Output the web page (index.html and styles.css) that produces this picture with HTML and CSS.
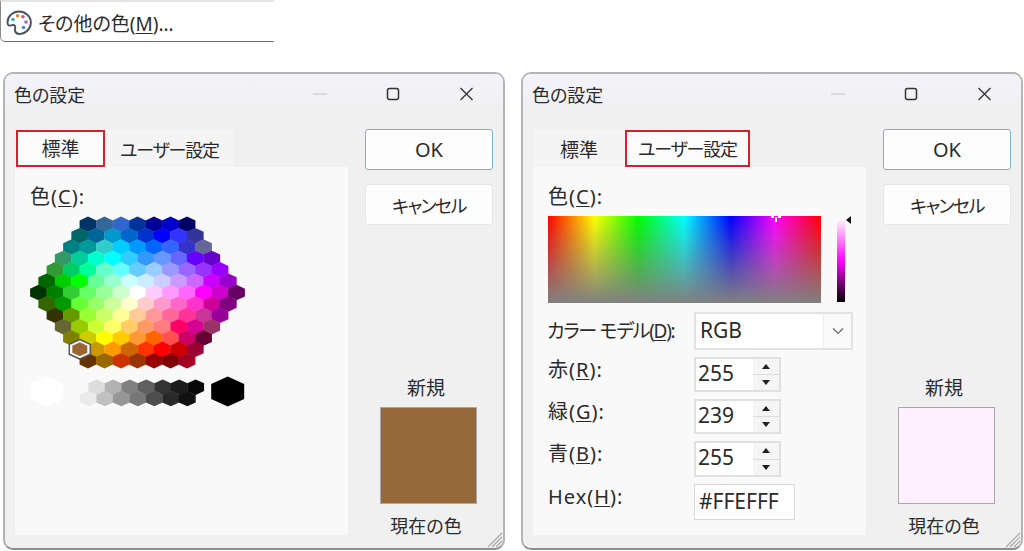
FILE: index.html
```html
<!DOCTYPE html>
<html lang="ja">
<head>
    <meta charset="UTF-8">
    <meta name="viewport" content="width=device-width, initial-scale=1.0">
    <title>色の設定</title>
    <link rel="stylesheet" href="styles.css">
</head>
<body>
    <div class="menu-item">
        <svg class="palette-icon" width="26" height="28" viewBox="0 0 26 28">
            <path d="M13 2.500C6.800 2.500 1.500 7.300 1.500 13.300c0 3.100 1.800 3.800 3.500 3.100 1.900-.7 3.800-.6 4.200 1.100.4 1.500-.6 2.700-.2 4.200.5 2.200 2.800 3.400 5.300 3.200 5.800-.5 10.600-5.400 10.600-11.400C24.900 7.300 19.200 2.500 13 2.500z" fill="#fff" stroke="#46525e" stroke-width="1.900"/>
            <circle cx="7" cy="10.500" r="1.800" fill="#3fa9c9"/>
            <circle cx="11.500" cy="6.800" r="1.800" fill="#e0883a"/>
            <circle cx="17" cy="7.800" r="1.800" fill="#d94f6e"/>
            <circle cx="20" cy="13" r="1.800" fill="#a45fc4"/>
            <circle cx="17.500" cy="18.500" r="1.800" fill="#5b7fd6"/>
        </svg>
        <span>その他の色(<u>M</u>)...</span>
    </div>

    <div class="dialogs">
        <div class="dialog">
            <div class="titlebar">
                <span class="title">色の設定</span>
                <div class="controls">
                    <svg width="73" height="16" viewBox="0 0 73 16"><path d="M29 8h14" stroke="#c4c4c8" stroke-width="1.200"/></svg>
                    <svg width="73" height="16" viewBox="0 0 73 16"><rect x="30.500" y="2.500" width="11" height="11" rx="2" fill="none" stroke="#333" stroke-width="1.500"/></svg>
                    <svg width="73" height="16" viewBox="0 0 73 16"><path d="M30.500 2l12 12M42.500 2l-12 12" stroke="#333" stroke-width="1.300"/></svg>
                </div>
            </div>
            <div class="main">
                <div class="tabs-col">
                    <div class="tabs">
                        <div class="tab tab-std active">標準</div>
                        <div class="tab tab-user">ユーザー設定</div>
                    </div>
                    <div class="page">
                        <div class="field-label">色(<u>C</u>):</div>
                        <svg id="hexes" class="hexes" width="222" height="200" viewBox="30 210 222 200"></svg>
                    </div>
                </div>
                <div class="side">
                    <div class="btn btn-default">OK</div>
                    <div class="btn btn-cancel">キャンセル</div>
                    <div class="new-label">新規</div>
                    <div class="swatch swatch-brown"></div>
                    <div class="cur-label">現在の色</div>
                </div>
            </div>
            <svg class="grip" width="18" height="18" viewBox="0 0 18 18"><path d="M17 3L3 17M17 7L7 17M17 11L11 17M17 15L15 17" stroke="#a8a8a8" stroke-width="1.200"/></svg>
        </div>

        <div class="dialog dialog-user">
            <div class="titlebar">
                <span class="title">色の設定</span>
                <div class="controls">
                    <svg width="73" height="16" viewBox="0 0 73 16"><path d="M29 8h14" stroke="#c4c4c8" stroke-width="1.200"/></svg>
                    <svg width="73" height="16" viewBox="0 0 73 16"><rect x="30.500" y="2.500" width="11" height="11" rx="2" fill="none" stroke="#333" stroke-width="1.500"/></svg>
                    <svg width="73" height="16" viewBox="0 0 73 16"><path d="M30.500 2l12 12M42.500 2l-12 12" stroke="#333" stroke-width="1.300"/></svg>
                </div>
            </div>
            <div class="main">
                <div class="tabs-col">
                    <div class="tabs">
                        <div class="tab tab-std">標準</div>
                        <div class="tab tab-user active">ユーザー設定</div>
                    </div>
                    <div class="page">
                        <div class="field-label">色(<u>C</u>):</div>
                        <div class="picker">
                            <div class="spectrum">
                                <span class="cross cross-v"></span>
                                <span class="cross cross-h"></span>
                            </div>
                            <div class="lum">
                                <span class="lum-arrow"></span>
                            </div>
                        </div>
                        <div class="form">
                            <label class="form-label form-label-mid">カラー モデル(<u>D</u>):</label>
                            <div class="combo">
                                <span class="combo-value">RGB</span>
                                <span class="combo-btn">
                                    <svg width="12" height="8" viewBox="0 0 12 8"><path d="M1 1.500l5 5 5-5" fill="none" stroke="#666" stroke-width="1.200"/></svg>
                                </span>
                            </div>
                            <label class="form-label">赤(<u>R</u>):</label>
                            <div class="spin">
                                <span class="spin-value">255</span>
                                <span class="spin-btns"><span class="spin-up"></span><span class="spin-down"></span></span>
                            </div>
                            <label class="form-label">緑(<u>G</u>):</label>
                            <div class="spin">
                                <span class="spin-value">239</span>
                                <span class="spin-btns"><span class="spin-up"></span><span class="spin-down"></span></span>
                            </div>
                            <label class="form-label">青(<u>B</u>):</label>
                            <div class="spin spin-tall">
                                <span class="spin-value">255</span>
                                <span class="spin-btns"><span class="spin-up"></span><span class="spin-down"></span></span>
                            </div>
                            <label class="form-label">Hex(<u>H</u>):</label>
                            <div class="hex-input">#FFEFFF</div>
                        </div>
                    </div>
                </div>
                <div class="side">
                    <div class="btn btn-default">OK</div>
                    <div class="btn btn-cancel">キャンセル</div>
                    <div class="new-label">新規</div>
                    <div class="swatch swatch-pink"></div>
                    <div class="cur-label">現在の色</div>
                </div>
            </div>
            <svg class="grip" width="18" height="18" viewBox="0 0 18 18"><path d="M17 3L3 17M17 7L7 17M17 11L11 17M17 15L15 17" stroke="#a8a8a8" stroke-width="1.200"/></svg>
        </div>
    </div>

    <script src="script.js"></script>
</body>
</html>
```

FILE: styles.css
```css
* {
    box-sizing: border-box;
}
body {
    margin: 0;
    background: #fff;
    color: #2b2b2b;
    font-family: "Noto Sans", "Noto Sans CJK JP", sans-serif;
    font-size: 20px;
    font-feature-settings: "palt";
    overflow: hidden;
}
u {
    text-underline-offset: 2px;
    text-decoration-thickness: 1px;
}

.menu-item {
    width: 274px;
    height: 42px;
    border-top: 2px solid #e4e4e4;
    border-left: 1px solid #8a8a8a;
    border-bottom: 1px solid #6f6f6f;
    border-bottom-left-radius: 5px;
    display: flex;
    align-items: center;
    padding: 2px 0 0 5px;
    gap: 6px;
    font-size: 19px;
    margin-bottom: 30px;
}

.dialogs {
    display: flex;
    gap: 16px;
    padding-left: 3px;
}
.dialog {
    position: relative;
    width: 502px;
    height: 478px;
    border: 2px solid #b4b4b4;
    border-bottom-color: #8f8f8f;
    border-radius: 10px;
    background: #f0f0f0;
    overflow: hidden;
}
.titlebar {
    height: 36px;
    display: flex;
    align-items: center;
    justify-content: space-between;
    padding-left: 9px;
    padding-top: 4px;
    background: linear-gradient(#f2f2f8, #f1f1f5 80%, #f0f0f0);
}
.title {
    font-size: 18px;
}
.controls {
    display: flex;
}
.controls svg {
    display: block;
}

.main {
    display: flex;
    padding: 20px 0 0 10px;
}
.tabs-col {
    width: 333px;
}
.tabs {
    display: flex;
    height: 37px;
}
.tab {
    display: flex;
    align-items: center;
    justify-content: center;
    background: #f4f4f4;
    font-size: 18px;
}
.tab-std {
    width: 89px;
    margin-left: 1px;
    font-size: 19px;
}
.tab-user {
    width: 129px;
    letter-spacing: -1.200px;
}
.dialog-user .tab-std {
    width: 92px;
    margin-left: 0;
}
.dialog-user .tab-user {
    width: 125px;
}
.tab.active {
    background: #fbfbfb;
    border: 2px solid #d2232a;
    padding-bottom: 2px;
}
.page {
    height: 368px;
    background: #f9f9f9;
    padding: 18px 0 0 15px;
}
.field-label {
    line-height: 24px;
    height: 24px;
    letter-spacing: 1px;
}
.hexes {
    display: block;
    margin-top: 1px;
}

.side {
    width: 128px;
    margin-left: 17px;
    display: flex;
    flex-direction: column;
    align-items: center;
    margin-top: -1px;
}
.btn {
    width: 100%;
    height: 41px;
    display: flex;
    align-items: center;
    justify-content: center;
    background: #fdfdfd;
    border: 1px solid #e6e6e6;
    border-radius: 3px;
    font-size: 18px;
    margin-bottom: 14px;
}
.btn-default {
    border: 1.500px solid #7fb0cc;
    font-size: 20px;
}
.btn-cancel {
    letter-spacing: -1.600px;
}
.new-label {
    margin-top: 137px;
    padding-right: 6px;
    font-size: 19px;
    line-height: 24px;
}
.swatch {
    width: 97px;
    height: 97px;
    margin: 7px 1px 0 0;
    border: 1px solid #a8a8a8;
}
.swatch-brown {
    background: #96683a;
}
.swatch-pink {
    background: #ffefff;
}
.cur-label {
    margin-top: 10px;
    padding-right: 6px;
    font-size: 18px;
    line-height: 24px;
}
.grip {
    position: absolute;
    right: 0;
    bottom: 0;
}

.picker {
    display: flex;
    margin-top: 7px;
}
.spectrum {
    position: relative;
    width: 273px;
    height: 87px;
    background:
        linear-gradient(rgba(128, 128, 128, 0), #808080),
        linear-gradient(to right, #ff0000, #ffff00 17%, #00ff00 33%, #00ffff 50%, #0000ff 67%, #ff00ff 83%, #ff0000);
}
.cross {
    position: absolute;
    background: #fff;
}
.cross-v {
    left: 227px;
    top: 1px;
    width: 2px;
    height: 5px;
}
.cross-h {
    left: 223px;
    top: 0;
    width: 10px;
    height: 2px;
    background: linear-gradient(to right, #fff 30%, transparent 30%, transparent 70%, #fff 70%);
}
.lum {
    position: relative;
    width: 8px;
    height: 82px;
    margin: 4px 0 0 16px;
    background: linear-gradient(#fff2ff, #ff00ff 50%, #000);
}
.lum-arrow {
    position: absolute;
    left: 9px;
    top: -4px;
    border: 4px solid transparent;
    border-left-width: 0;
    border-right: 5px solid #111;
}

.form {
    display: grid;
    grid-template-columns: 146px 159px;
    row-gap: 7px;
    margin-top: 9px;
    justify-items: start;
}
.form-label {
    line-height: 24px;
    margin-top: 1px;
    letter-spacing: 1px;
}
.form-label-mid {
    align-self: center;
    margin: 0 0 0 -1px;
    font-size: 19px;
    letter-spacing: -1.300px;
}
.combo {
    width: 159px;
    height: 38px;
    display: flex;
    justify-content: space-between;
    background: #fff;
    border: 2px solid #e2e2e2;
    font-size: 21px;
    line-height: 33px;
}
.combo-value {
    padding-left: 4px;
}
.combo-btn {
    width: 28px;
    display: flex;
    align-items: center;
    justify-content: center;
    background: #fafafa;
    border-left: 1px solid #ececec;
}
.spin {
    width: 87px;
    height: 35px;
    display: flex;
    justify-content: space-between;
    background: #fff;
    border: 2px solid #e0e0e0;
    font-size: 21px;
    line-height: 29px;
}
.spin-tall {
    height: 36px;
}
.spin-value {
    padding-left: 2px;
}
.spin-btns {
    width: 26px;
    display: flex;
    flex-direction: column;
    background: #f5f5f5;
}
.spin-up,
.spin-down {
    flex: 1;
    position: relative;
}
.spin-up {
    border-bottom: 1px solid #dcdcdc;
}
.spin-up::after,
.spin-down::after {
    content: "";
    position: absolute;
    left: 9px;
    top: 5px;
    border-left: 4px solid transparent;
    border-right: 4px solid transparent;
}
.spin-up::after {
    border-bottom: 5px solid #222;
}
.spin-down::after {
    border-top: 5px solid #222;
}
.hex-input {
    width: 101px;
    height: 36px;
    background: #fff;
    border: 1px solid #d8d8d8;
    font-size: 21px;
    line-height: 33px;
    padding-left: 4px;
}
```

FILE: script.js
```js
// office style colour hexagon, one array per row
const rows = [
    ["003366", "336699", "3366CC", "003399", "000099", "0000CC", "000066"],
    ["006666", "006699", "0099CC", "0066CC", "0033CC", "0000FF", "3333FF", "333399"],
    ["008080", "009999", "33CCCC", "00CCFF", "0099FF", "0066FF", "3366FF", "3333CC", "666699"],
    ["339966", "00CC99", "00FFCC", "00FFFF", "33CCFF", "3399FF", "6699FF", "6666FF", "6600FF", "6600CC"],
    ["339933", "00CC66", "00FF99", "66FFCC", "66FFFF", "66CCFF", "99CCFF", "9999FF", "9966FF", "9933FF", "9900FF"],
    ["006600", "00CC00", "00FF00", "66FF99", "99FFCC", "CCFFFF", "CCECFF", "CCCCFF", "CC99FF", "CC66FF", "CC00FF", "9900CC"],
    ["003300", "008000", "33CC33", "66FF66", "99FF99", "CCFFCC", "FFFFFF", "FFCCFF", "FF99FF", "FF66FF", "FF00FF", "CC00CC", "660066"],
    ["336600", "009900", "66FF33", "99FF66", "CCFF99", "FFFFCC", "FFCCCC", "FF99CC", "FF66CC", "FF33CC", "CC0099", "800080"],
    ["333300", "669900", "99FF33", "CCFF66", "FFFF99", "FFCC99", "FF9999", "FF6699", "FF3399", "CC3399", "990099"],
    ["666633", "99CC00", "CCFF33", "FFFF66", "FFCC66", "FF9966", "FF7C80", "FF0066", "D60093", "993366"],
    ["808000", "CCCC00", "FFFF00", "FFCC00", "FF9933", "FF6600", "FF5050", "CC0066", "660033"],
    ["996633", "CC9900", "FF9900", "CC6600", "FF3300", "FF0000", "CC0000", "990033"],
    ["663300", "996600", "CC3300", "993300", "990000", "800000", "A50021"]
];
const grayTop = ["DDDDDD", "B2B2B2", "808080", "5F5F5F", "333333", "1C1C1C", "080808"];
const grayBottom = ["EAEAEA", "C0C0C0", "969696", "777777", "4D4D4D", "292929", "111111"];

const svg = document.getElementById("hexes");
const stepX = 16.5;
const stepY = 11.37;

function addHex(cx, cy, w, h, color, stroke) {
    const hex = document.createElementNS("http://www.w3.org/2000/svg", "polygon");
    const pts = [[0, -h / 2], [w / 2, -h / 4], [w / 2, h / 4], [0, h / 2], [-w / 2, h / 4], [-w / 2, -h / 4]];
    hex.setAttribute("points", pts.map(p => (cx + p[0]) + "," + (cy + p[1])).join(" "));
    hex.setAttribute("fill", "#" + color);
    if (stroke) {
        hex.setAttribute("stroke", stroke);
        hex.setAttribute("stroke-width", "1.5");
    }
    svg.appendChild(hex);
}

rows.forEach((row, r) => {
    const startX = 137.5 - (row.length - 1) * stepX / 2;
    row.forEach((color, i) => {
        addHex(startX + i * stepX, 224.3 + r * stepY, stepX + 0.3, 15.5, color);
    });
});

grayTop.forEach((color, i) => addHex(96.7 + i * stepX, 387.2, stepX + 0.3, 15.5, color));
grayBottom.forEach((color, i) => addHex(88.3 + i * stepX, 398.6, stepX + 0.3, 15.5, color));

addHex(47, 391.5, 33, 30, "FFFFFF");
addHex(227.7, 391.5, 33, 30, "000000");

// selected colour gets a dark ring and a white ring
addHex(79.8, 349.3, 21, 19.5, "FFFFFF", "#555");
addHex(79.8, 349.3, 15, 14, "996633");
```
